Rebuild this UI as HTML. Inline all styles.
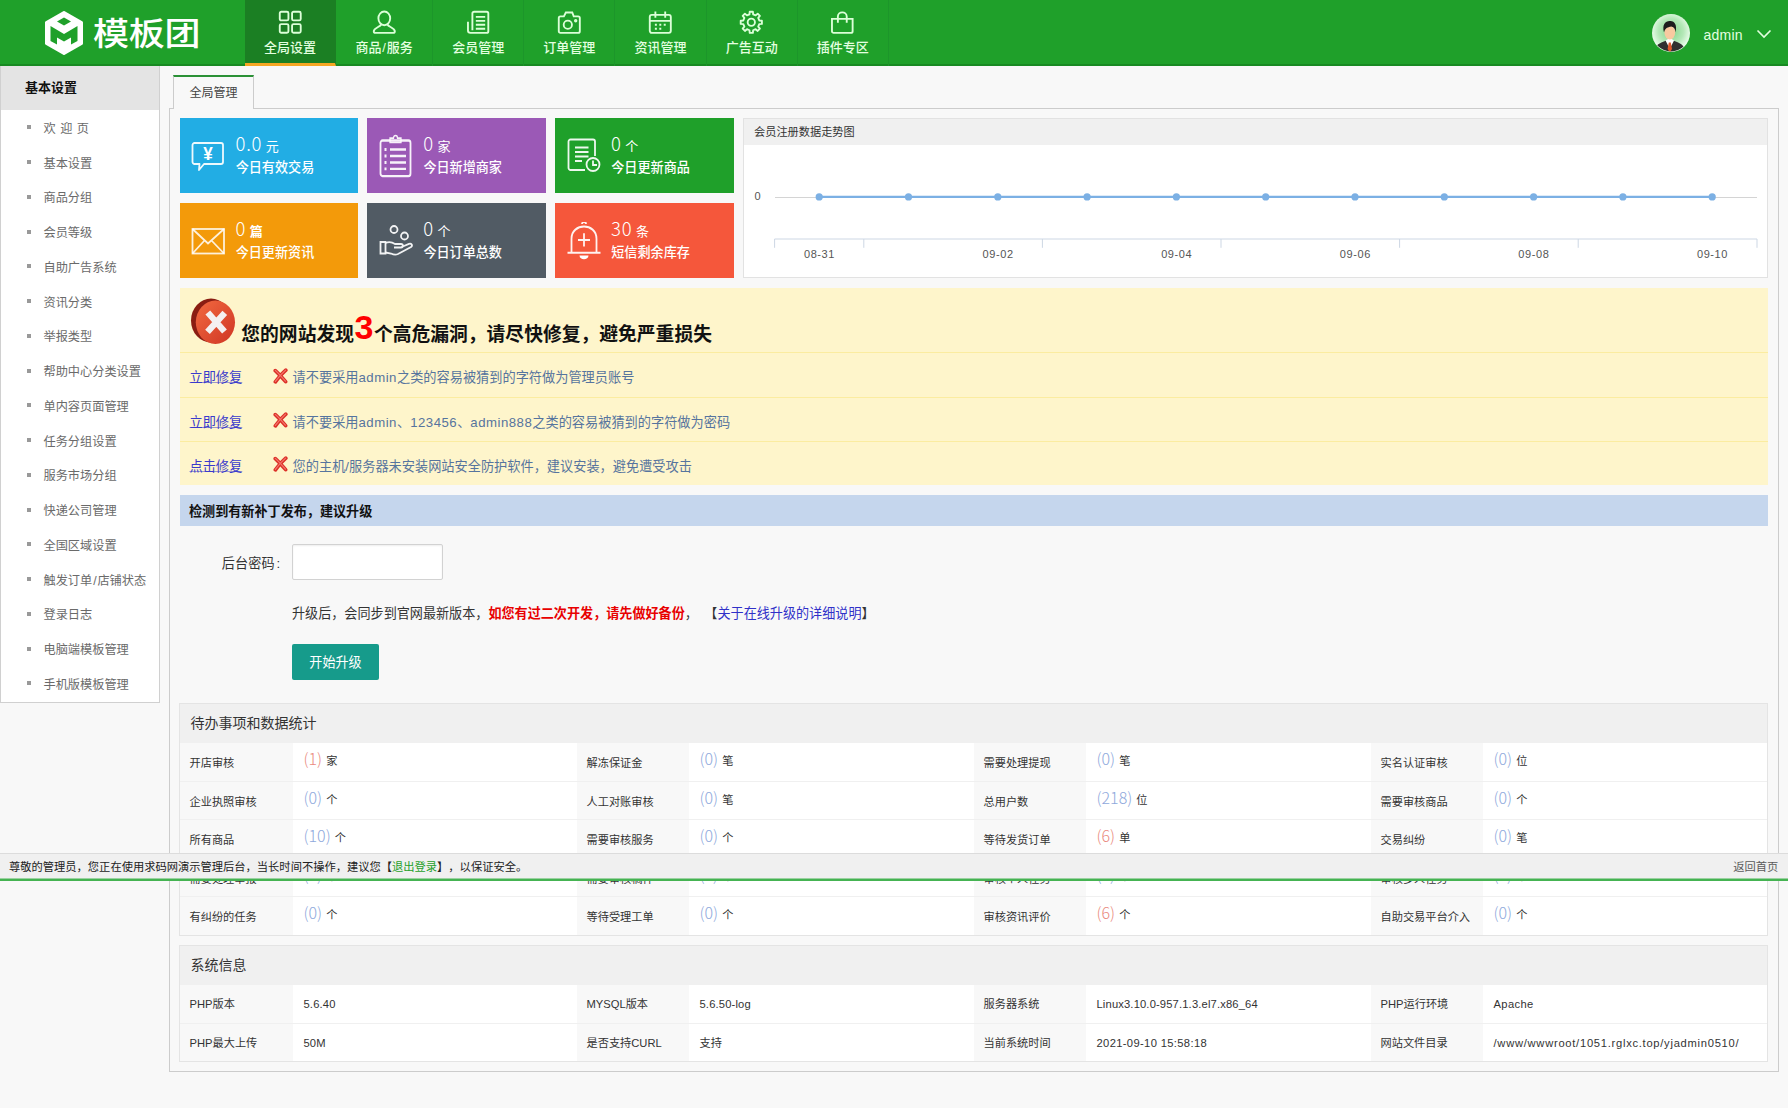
<!DOCTYPE html>
<html lang="zh-CN">
<head>
<meta charset="utf-8">
<title>模板团 - 全局管理</title>
<style>
*{box-sizing:border-box;}
html,body{margin:0;padding:0;}
body{width:1788px;height:1108px;overflow:hidden;background:#f8f8f8;font-family:"Liberation Sans","Noto Sans CJK SC",sans-serif;font-size:12px;color:#333;position:relative;text-spacing-trim:space-all;}
a{text-decoration:none;color:inherit;}
ul{list-style:none;margin:0;padding:0;}

/* ---------- header ---------- */
#hd{position:absolute;left:0;top:0;width:1788px;height:66px;background:#1fa02a;border-bottom:2px solid #188a22;}
#logo{position:absolute;left:44px;top:11px;width:160px;height:44px;}
#logo svg{position:absolute;left:0;top:0;}
#logo .t{position:absolute;left:49px;top:-3px;font-size:36px;line-height:50px;color:#fff;font-weight:500;letter-spacing:-0.2px;white-space:nowrap;transform:scaleY(0.88);transform-origin:0 34px;}
#nav{position:absolute;left:245px;top:0;height:66px;display:flex;}
#nav li{height:66px;width:91.15px;padding:0;border-right:1px solid #1c962a;text-align:center;color:#e4ffe0;font-size:13px;position:relative;}
#nav li.w{width:97px;}
#nav li svg{display:block;margin:10.2px auto 0;width:24.6px;height:24.6px;}
#nav li span{display:block;line-height:18px;margin-top:4px;font-weight:500;white-space:nowrap;}
#nav li.on{background:#1b7f23;border-bottom:3px solid #f5a623;border-right-color:#1b7f23;}
#user{position:absolute;left:0;top:0;width:1788px;height:0;}
#user .av{position:absolute;left:1652px;top:14px;width:38px;height:38px;}
#user .nm{position:absolute;left:1703.5px;top:26px;font-size:14px;line-height:18px;color:#e4ffe0;letter-spacing:0.25px;}
#user .ar{position:absolute;left:1756px;top:29px;}

/* ---------- sidebar ---------- */
#sd{position:absolute;left:0;top:66px;width:160px;height:636.5px;background:#fff;border:1px solid #d0d0d0;border-top:0;}
#sd h3{margin:0;height:43.5px;background:#e4e4e4;font-size:13px;line-height:43px;padding-left:24px;color:#111;font-weight:bold;}
#sd ul{padding-top:2.4px;}
#sd li{height:34.75px;line-height:34.75px;padding-left:42.5px;font-size:12.2px;color:#6a6a6a;position:relative;white-space:nowrap;}
#sd li:before{content:"";position:absolute;left:26.3px;top:13.5px;width:4px;height:4px;background:#999;}

/* ---------- main ---------- */
#tab{position:absolute;left:173px;top:75px;width:81px;height:34px;border:1px solid #ccc;border-top:2px solid #2b9136;border-bottom:0;background:#f8f8f8;font-size:12px;line-height:33px;text-align:center;color:#444;z-index:2;}
#box{position:absolute;left:169px;top:108px;width:1610px;height:964px;border:1px solid #ccc;}

.card{position:absolute;width:178.5px;height:75.2px;color:#fff;}
.card svg{position:absolute;left:11.5px;top:22px;width:34px;height:34px;}
.card .n{position:absolute;left:56px;top:13px;font-family:"Noto Sans CJK SC","Liberation Sans",sans-serif;font-size:18.5px;line-height:24px;font-weight:300;white-space:nowrap;letter-spacing:0.8px;}
.card .n i{font-style:normal;font-size:13px;font-weight:400;margin-left:3.5px;letter-spacing:0;}
.card .l{position:absolute;left:56.2px;top:40.5px;font-size:13.1px;line-height:18px;white-space:nowrap;font-weight:500;}

#chart{position:absolute;left:743px;top:118px;width:1025px;height:160px;background:#fff;border:1px solid #e2e2e2;}
#chart h4{margin:0;height:26px;background:#f0f0f0;font-size:11.2px;font-weight:normal;line-height:26px;padding-left:10px;color:#333;}
#chart svg{position:absolute;left:0;top:26px;}

#warn{position:absolute;left:180px;top:287.8px;width:1588px;height:196.8px;background:#fef5cb;}
#warn .ic{position:absolute;left:10px;top:10px;}
#warn h2{position:absolute;left:61.3px;top:29.4px;margin:0;font-size:18.8px;line-height:30px;font-weight:bold;color:#111;white-space:nowrap;}
#warn h2 b{color:#f00;font-size:34px;font-weight:bold;vertical-align:1.5px;margin:0 0.5px;line-height:20px;}
#warn .r{position:absolute;left:0;width:1588px;height:44px;border-top:1px solid #fbeca0;font-size:13.2px;line-height:44px;white-space:nowrap;}
#warn .r a{position:absolute;left:9.5px;top:2.8px;color:#3a3acc;text-decoration:underline;text-decoration-thickness:1px;text-underline-offset:0.3px;text-decoration-color:rgba(58,58,204,0.5);}
#warn .r svg{position:absolute;left:93px;top:14.5px;}
#warn .r span{position:absolute;left:112.6px;top:2.8px;color:#56749e;}
#warn .r span u{text-decoration:none;letter-spacing:0.5px;}
#upd{position:absolute;left:180px;top:494.6px;width:1588px;height:31px;background:#c5d6ed;font-size:13.1px;line-height:34px;font-weight:bold;color:#111;padding-left:9px;}
#pwl{position:absolute;left:221.8px;top:554.5px;font-size:13.1px;line-height:18px;color:#333;letter-spacing:0.1px;}
#pw{position:absolute;left:292px;top:544px;width:151px;height:36px;border:1px solid #d2d2d2;border-radius:2px;background:#fff;box-shadow:inset 0 1px 2px rgba(0,0,0,0.07);}
#tip{position:absolute;left:292px;top:604.5px;font-size:13.1px;line-height:18px;color:#333;white-space:nowrap;word-spacing:2.8px;}
#tip b{color:#e80000;}
#tip a{color:#3030c8;}
#btn{position:absolute;left:292px;top:644px;width:87px;height:36px;background:#169b8b;color:#fff;font-size:13.1px;line-height:38.5px;text-align:center;border-radius:2px;}

.tb{position:absolute;left:179px;width:1589px;border:1px solid #e4e4e4;background:#fff;}
.tb h4{margin:0;height:38px;background:#f0f0f0;font-size:14px;font-weight:normal;line-height:39px;padding-left:10.5px;color:#333;}
.tb .row{display:flex;height:38.5px;border-top:1px solid #f0f0f0;}
.tb .k{width:112px;background:#f8f8f8;font-size:11.2px;line-height:40.2px;padding-left:9.5px;color:#333;white-space:nowrap;flex:none;}
.tb .v{width:285px;font-size:11.2px;line-height:31px;padding-left:10.5px;color:#333;white-space:nowrap;flex:none;}
.tb .v:last-child{width:auto;flex:1;}
.tb .k:first-child{width:113px;}
.tb .k:first-child+.v{width:284px;}
.tb .v em{font-style:normal;font-family:"Noto Sans CJK SC","Liberation Sans",sans-serif;font-size:16px;font-weight:300;color:#8fa9dc;margin-right:4px;letter-spacing:0px;position:relative;top:0px;}
.tb .v em.rd{color:#ea8a80;}

.tb.sys .v{line-height:38.8px;letter-spacing:0.15px;}
.tb.sys .k{line-height:38.8px;}
#ft{position:absolute;left:0;top:853px;width:1788px;height:28px;box-shadow:inset 0 -1px 0 rgba(69,179,82,0.5);background:#f0f0f0;border-top:1px solid #dcdcdc;border-bottom:2px solid #45b352;font-size:11.28px;line-height:26px;color:#222;padding-left:9px;z-index:5;white-space:nowrap;}
#ft a{color:#1fa02a;}
#ft .bk{position:absolute;right:9.8px;top:0;color:#5a5a5a;}
</style>
</head>
<body>

<div id="hd">
  <div id="logo">
    <svg width="40" height="44" viewBox="0 0 40 44"><path d="M20 1.5 L37.5 11.5 V32.5 L20 42.5 L2.5 32.5 V11.5 Z" fill="#fff" stroke="#fff" stroke-width="3" stroke-linejoin="round"/><path d="M20 6.500 L27 10.500 L20 14.500 L13 10.500 Z" fill="#1fa02a"/><path d="M6.500 15 L20 23 L33.500 15 V30 L27 33.500 V26.500 L20 30.500 L13 26.500 V33.500 L6.500 30 Z" fill="#1fa02a"/></svg>
    <div class="t">模板团</div>
  </div>
  <ul id="nav">
    <li class="on"><svg viewBox="0 0 25 25" fill="none" stroke="#dcffd8" stroke-width="1.9"><rect x="1.800" y="1.800" width="8.800" height="8.800" rx="1.500"/><rect x="14.300" y="1.800" width="8.800" height="8.800" rx="1.500"/><rect x="1.800" y="14.300" width="8.800" height="8.800" rx="1.500"/><rect x="14.300" y="14.300" width="8.800" height="8.800" rx="1.500"/></svg><span>全局设置</span></li>
    <li class="w"><svg viewBox="0 0 25 25" fill="none" stroke="#dcffd8" stroke-width="1.9"><ellipse cx="12.500" cy="8.500" rx="6" ry="7"/><path d="M9.500 14.500 C8 17.500 2 18 1.800 21.500 C1.800 22.800 2.500 23.200 3.500 23.200 H21.500 C22.500 23.200 23.200 22.800 23.200 21.500 C23 18 17 17.500 15.500 14.500"/></svg><span>商品<b style="font-weight:normal;margin:0 0.8px">/</b>服务</span></li>
    <li><svg viewBox="0 0 25 25" fill="none" stroke="#dcffd8" stroke-width="1.9"><path d="M6.500 20.500 V3.500 C6.500 2.500 7.200 1.800 8.200 1.800 H21 C22 1.800 22.700 2.500 22.700 3.500 V21.500 C22.700 22.500 22 23.200 21 23.200 H4.500 C3 23.200 2 22.200 2 20.800 V12"/><path d="M10 7 H19.500 M10 11 H19.500 M10 15 H19.500 M10 19 H19.500"/></svg><span>会员管理</span></li>
    <li><svg viewBox="0 0 25 25" fill="none" stroke="#dcffd8" stroke-width="1.9"><path d="M3.500 6.500 H7 L9 2.500 H15.500 L17 6.500 H21.500 C22.500 6.500 23.200 7.200 23.200 8.200 V21.500 C23.200 22.500 22.500 23.200 21.500 23.200 H3.500 C2.500 23.200 1.800 22.500 1.800 21.500 V8.200 C1.800 7.200 2.500 6.500 3.500 6.500 Z"/><circle cx="11" cy="15" r="4.200"/><circle cx="19" cy="11" r="0.800"/></svg><span>订单管理</span></li>
    <li><svg viewBox="0 0 25 25" fill="none" stroke="#dcffd8" stroke-width="1.9"><rect x="1.800" y="5" width="21.400" height="18.200" rx="2"/><path d="M1.800 11 H23.200 M7.500 1.500 V8 M17.500 1.500 V8"/><path d="M7 15 H9 M11.500 15 H13.500 M16 15 H18 M7 19 H9 M11.500 19 H13.500" stroke-width="2"/></svg><span>资讯管理</span></li>
    <li><svg viewBox="0 0 25 25" fill="none" stroke="#dcffd8" stroke-width="1.9" stroke-linejoin="round"><path d="M10.63 4.41 L10.89 1.72 L14.11 1.72 L14.37 4.41 L16.90 5.46 L18.98 3.74 L21.26 6.02 L19.54 8.10 L20.59 10.63 L23.28 10.89 L23.28 14.11 L20.59 14.37 L19.54 16.90 L21.26 18.98 L18.98 21.26 L16.90 19.54 L14.37 20.59 L14.11 23.28 L10.89 23.28 L10.63 20.59 L8.10 19.54 L6.02 21.26 L3.74 18.98 L5.46 16.90 L4.41 14.37 L1.72 14.11 L1.72 10.89 L4.41 10.63 L5.46 8.10 L3.74 6.02 L6.02 3.74 L8.10 5.46 Z"/><circle cx="12.500" cy="12.500" r="3.700"/></svg><span>广告互动</span></li>
    <li><svg viewBox="0 0 25 25" fill="none" stroke="#dcffd8" stroke-width="1.9"><path d="M2 9 H23 V21.500 C23 22.500 22.300 23.200 21.300 23.200 H3.700 C2.700 23.200 2 22.500 2 21.500 Z"/><path d="M8 13 V6.500 C8 1 17 1 17 6.500 V13"/></svg><span>插件专区</span></li>
  </ul>
  <div id="user">
    <svg class="av" viewBox="0 0 38 38"><defs><radialGradient id="ag" cx="50%" cy="45%" r="55%"><stop offset="0" stop-color="#7fd487"/><stop offset="0.600" stop-color="#b5e8b8"/><stop offset="1" stop-color="#f2fff2"/></radialGradient><clipPath id="ac"><circle cx="19" cy="19" r="18.500"/></clipPath></defs><circle cx="19" cy="19" r="19" fill="url(#ag)"/><g clip-path="url(#ac)"><g transform="translate(-1.2 0)"><path d="M3 38 C4 31 10 28.500 15 26.800 L19 31 L23 26.800 C28 28.500 34 31 35 38 Z" fill="#303030"/><path d="M14.800 26.500 L19 35 L23.200 26.500 L19 24 Z" fill="#fff"/><path d="M18 28.500 H20 L21.200 35 L19 38.500 L16.800 35 Z" fill="#e2572b"/><ellipse cx="19" cy="18.300" rx="5.400" ry="7.200" fill="#f8c9a0"/><path d="M13.200 18.500 C11 10 15 6.800 19 7 C23.500 6.500 26.500 10.500 24.800 18.500 C24.600 15 23.500 13 20.500 12.500 C17.500 13.500 14.500 13 13.200 18.500 Z" fill="#1c1c1c"/></g></g></svg>
    <div class="nm">admin</div>
    <svg class="ar" width="16" height="10" viewBox="0 0 16 10" fill="none" stroke="#e4ffe0" stroke-width="1.6"><path d="M1.500 1.500 L8 8 L14.500 1.500"/></svg>
  </div>
</div>

<div id="sd">
  <h3>基本设置</h3>
  <ul>
    <li style="word-spacing:1.1px">欢 迎 页</li>
    <li>基本设置</li>
    <li>商品分组</li>
    <li>会员等级</li>
    <li>自助广告系统</li>
    <li>资讯分类</li>
    <li>举报类型</li>
    <li>帮助中心分类设置</li>
    <li>单内容页面管理</li>
    <li>任务分组设置</li>
    <li>服务市场分组</li>
    <li>快递公司管理</li>
    <li>全国区域设置</li>
    <li>触发订单<span style="margin:0 0.9px">/</span>店铺状态</li>
    <li>登录日志</li>
    <li>电脑端模板管理</li>
    <li>手机版模板管理</li>
  </ul>
</div>

<div id="tab">全局管理</div>
<div id="box"></div>

<!-- CARDS -->
<div class="card" style="left:179.5px;top:118px;background:#22ade4;">
  <svg viewBox="0 0 34 34" fill="none" stroke="#fff" stroke-width="1.8" stroke-opacity="0.92"><path d="M3 3 H30 C31 3 32 4 32 5 V22 C32 23 31 24 30 24 H13 L8 30 L8.500 24 H3.500 C2.500 24 1.500 23 1.500 22 V5 C1.500 4 2.500 3 3.500 3 Z" stroke-linejoin="round"/><text x="17" y="20.300" font-family="Liberation Sans, sans-serif" font-size="18" font-weight="bold" textLength="9.5" lengthAdjust="spacingAndGlyphs" text-anchor="middle" fill="#fff" stroke="none">¥</text></svg>
  <div class="n">0.0<i>元</i></div><div class="l">今日有效交易</div>
</div>
<div class="card" style="left:367.2px;top:118px;background:#9b59b6;">
  <svg viewBox="0 0 34 34" fill="none" stroke="#fff" stroke-width="1.8" stroke-opacity="0.92" style="top:15.5px;height:44px;" preserveAspectRatio="none"><rect x="1.500" y="5" width="30" height="27.500" rx="2"/><path d="M11 5 V3.200 H14.500 C14.500 0.500 18.500 0.500 18.500 3.200 H22 V6.500 H11 Z" stroke-width="1.300"/><path d="M11 12 H27 M11 17 H27 M11 22 H27 M11 27 H27"/><path d="M5.500 12 H7.500 M5.500 17 H7.500 M5.500 22 H7.500 M5.500 27 H7.500" stroke-width="2.200"/></svg>
  <div class="n">0<i>家</i></div><div class="l">今日新增商家</div>
</div>
<div class="card" style="left:555.1px;top:118px;background:#1fa02a;">
  <svg viewBox="0 0 34 34" fill="none" stroke="#fff" stroke-width="1.8" stroke-opacity="0.92" style="top:20px"><path d="M18 32 H3.500 C2.500 32 1.500 31 1.500 30 V3.500 C1.500 2.500 2.500 1.500 3.500 1.500 H26 C27 1.500 28 2.500 28 3.500 V18"/><path d="M8 9.500 H21.500 M8 14 H21.500 M8 18.500 H21.500 M8 23 H15"/><circle cx="26" cy="26.500" r="6.500" stroke-width="1.800"/><path d="M26 22.500 V27 H30" stroke-width="1.800"/></svg>
  <div class="n">0<i>个</i></div><div class="l">今日更新商品</div>
</div>
<div class="card" style="left:179.5px;top:203px;background:#f39a0a;">
  <svg viewBox="0 0 34 34" fill="none" stroke="#fff" stroke-width="1.8" stroke-opacity="0.85" style="top:20.5px"><rect x="1.500" y="5" width="31.500" height="24.500"/><path d="M1.500 5 L17 19.500 L33 5 M1.500 29.500 L13.500 16.500 M33 29.500 L20.500 16.500"/></svg>
  <div class="n">0<i style="font-weight:bold">篇</i></div><div class="l">今日更新资讯</div>
</div>
<div class="card" style="left:367.2px;top:203px;background:#515b64;">
  <svg viewBox="0 0 34 34" fill="none" stroke="#fff" stroke-width="1.8" stroke-opacity="0.92" style="top:19.5px"><circle cx="15" cy="6.500" r="3.500"/><circle cx="25.500" cy="13" r="3.500"/><path d="M1.500 19 H6.500 V30.500 H1.500 Z"/><path d="M6.500 20 C10 18.500 13 19 16 21 H22 C24.500 21 24.500 24.500 22 24.500 H15 M22.500 24 L30 20.800 C32.500 20 34 22.500 32 24 L19 31 C17 32 14 31.500 12 30.500 L6.500 29.500"/></svg>
  <div class="n">0<i>个</i></div><div class="l">今日订单总数</div>
</div>
<div class="card" style="left:555.1px;top:203px;background:#f5573b;">
  <svg viewBox="0 0 34 34" fill="none" stroke="#fff" stroke-width="1.8" stroke-opacity="0.92" style="top:19px;height:38px;" preserveAspectRatio="none"><path d="M4.500 27 V15 C4.500 0.500 29.500 0.500 29.500 15 V27 M0.500 27.500 H33.500 M15 1.800 C15 -0.500 19 -0.500 19 1.800"/><path d="M17 10 V22 M11 16 H23" stroke-width="1.800"/><path d="M12.500 30 H21.500 C21.500 34.500 12.500 34.500 12.500 30 Z" fill="#fff" stroke="none"/></svg>
  <div class="n">30<i>条</i></div><div class="l">短信剩余库存</div>
</div>

<!-- CHART -->
<div id="chart">
  <h4>会员注册数据走势图</h4>
  <svg width="1023" height="132" viewBox="0 0 1023 132" font-family="Liberation Sans, sans-serif" font-size="11" fill="#555">
    <path d="M31 52.5 H1013" stroke="#d4d4d4" stroke-width="1" fill="none"/>
    <path d="M30.6 94.0 H1013 M30.6 94.0 V102.8 M119.8 94.0 V102.8 M298.4 94.0 V102.8 M477.0 94.0 V102.8 M655.6 94.0 V102.8 M834.2 94.0 V102.8 M1013.0 94.0 V102.8" stroke="#cdd7e4" stroke-width="1" fill="none"/>
    <polyline points="75.2,51.8 164.5,51.8 253.8,51.8 343.1,51.8 432.4,51.8 521.7,51.8 611.0,51.8 700.3,51.8 789.6,51.8 878.9,51.8 968.2,51.8" fill="none" stroke="#7cb0e4" stroke-width="2.2"/>
    <g fill="#7cb0e4"><circle cx="75.2" cy="51.9" r="3.6"/><circle cx="164.5" cy="51.9" r="3.6"/><circle cx="253.8" cy="51.9" r="3.6"/><circle cx="343.1" cy="51.9" r="3.6"/><circle cx="432.4" cy="51.9" r="3.6"/><circle cx="521.7" cy="51.9" r="3.6"/><circle cx="611.0" cy="51.9" r="3.6"/><circle cx="700.3" cy="51.9" r="3.6"/><circle cx="789.6" cy="51.9" r="3.6"/><circle cx="878.9" cy="51.9" r="3.6"/><circle cx="968.2" cy="51.9" r="3.6"/></g>
    <text x="13.6" y="55.3" text-anchor="middle">0</text>
    <g letter-spacing="0.6"><text x="75.5" y="113.0" text-anchor="middle">08-31</text><text x="254.1" y="113.0" text-anchor="middle">09-02</text><text x="432.7" y="113.0" text-anchor="middle">09-04</text><text x="611.3" y="113.0" text-anchor="middle">09-06</text><text x="789.9" y="113.0" text-anchor="middle">09-08</text><text x="968.5" y="113.0" text-anchor="middle">09-10</text></g>
  </svg>
</div>

<!-- WARN -->
<div id="warn">
  <svg class="ic" width="46" height="48" viewBox="0 0 46 48"><defs><linearGradient id="wg" x1="0" y1="0" x2="1" y2="1"><stop offset="0" stop-color="#f26a40"/><stop offset="1" stop-color="#cf3524"/></linearGradient></defs><ellipse cx="21" cy="22.500" rx="20" ry="22" fill="#8a1d12"/><ellipse cx="25.400" cy="24.300" rx="19.600" ry="21.700" fill="url(#wg)"/><path d="M17.800 14.500 L34.500 33.500 M34.800 14.800 L17.500 33.800" stroke="#f4f0f0" stroke-width="6.300"/></svg>
  <h2>您的网站发现<b>3</b>个高危漏洞，请尽快修复，避免严重损失</h2>
  <div class="r" style="top:64.7px;"><a>立即修复</a><svg width="15" height="16" viewBox="0 0 15 16" fill="none" stroke-linecap="round"><path d="M2.300 2.600 C5.500 5.500 9 9.500 12.600 13.600 M12.800 2.200 C9 5.500 5.500 9.500 2.400 13.800" stroke="#dc3128" stroke-width="3.700"/><path d="M2.300 2.400 C5.500 5.300 9 9.200 12.400 13.200 M12.600 2.100 C9 5.300 5.500 9.200 2.400 13.400" stroke="#f4766c" stroke-width="1.200"/></svg><span>请不要采用<u>admin</u>之类的容易被猜到的字符做为管理员账号</span></div>
  <div class="r" style="top:109px;"><a>立即修复</a><svg width="15" height="16" viewBox="0 0 15 16" fill="none" stroke-linecap="round"><path d="M2.300 2.600 C5.500 5.500 9 9.500 12.600 13.600 M12.800 2.200 C9 5.500 5.500 9.500 2.400 13.800" stroke="#dc3128" stroke-width="3.700"/><path d="M2.300 2.400 C5.500 5.300 9 9.200 12.400 13.200 M12.600 2.100 C9 5.300 5.500 9.200 2.400 13.400" stroke="#f4766c" stroke-width="1.200"/></svg><span>请不要采用<u>admin</u>、<u>123456</u>、<u>admin888</u>之类的容易被猜到的字符做为密码</span></div>
  <div class="r" style="top:153px;"><a>点击修复</a><svg width="15" height="16" viewBox="0 0 15 16" fill="none" stroke-linecap="round"><path d="M2.300 2.600 C5.500 5.500 9 9.500 12.600 13.600 M12.800 2.200 C9 5.500 5.500 9.500 2.400 13.800" stroke="#dc3128" stroke-width="3.700"/><path d="M2.300 2.400 C5.500 5.300 9 9.200 12.400 13.200 M12.600 2.100 C9 5.300 5.500 9.200 2.400 13.400" stroke="#f4766c" stroke-width="1.200"/></svg><span>您的主机/服务器未安装网站安全防护软件，建议安装，避免遭受攻击</span></div>
</div>

<!-- UPDATE -->
<div id="upd">检测到有新补丁发布，建议升级</div>
<div id="pwl">后台密码<span style="margin-left:2px">:</span></div>
<div id="pw"></div>
<div id="tip">升级后，会同步到官网最新版本，<b>如您有过二次开发，请先做好备份</b>， 【<a>关于在线升级的详细说明</a>】</div>
<div id="btn">开始升级</div>

<!-- TABLES -->
<div class="tb" style="top:703px;">
  <h4>待办事项和数据统计</h4>
  <div class="row"><div class="k">开店审核</div><div class="v"><em class="rd">(1)</em>家</div><div class="k">解冻保证金</div><div class="v"><em>(0)</em>笔</div><div class="k">需要处理提现</div><div class="v"><em>(0)</em>笔</div><div class="k">实名认证审核</div><div class="v"><em>(0)</em>位</div></div>
  <div class="row"><div class="k">企业执照审核</div><div class="v"><em>(0)</em>个</div><div class="k">人工对账审核</div><div class="v"><em>(0)</em>笔</div><div class="k">总用户数</div><div class="v"><em>(218)</em>位</div><div class="k">需要审核商品</div><div class="v"><em>(0)</em>个</div></div>
  <div class="row"><div class="k">所有商品</div><div class="v"><em>(10)</em>个</div><div class="k">需要审核服务</div><div class="v"><em>(0)</em>个</div><div class="k">等待发货订单</div><div class="v"><em class="rd">(6)</em>单</div><div class="k">交易纠纷</div><div class="v"><em>(0)</em>笔</div></div>
  <div class="row"><div class="k">需要处理举报</div><div class="v"><em>(0)</em>个</div><div class="k">需要审核稿件</div><div class="v"><em>(0)</em>个</div><div class="k">审核个人任务</div><div class="v"><em>(0)</em>个</div><div class="k">审核多人任务</div><div class="v"><em>(0)</em>个</div></div>
  <div class="row"><div class="k">有纠纷的任务</div><div class="v"><em>(0)</em>个</div><div class="k">等待受理工单</div><div class="v"><em>(0)</em>个</div><div class="k">审核资讯评价</div><div class="v"><em class="rd">(6)</em>个</div><div class="k">自助交易平台介入</div><div class="v"><em>(0)</em>个</div></div>
</div>
<div class="tb sys" style="top:945px;">
  <h4>系统信息</h4>
  <div class="row"><div class="k">PHP版本</div><div class="v">5.6.40</div><div class="k">MYSQL版本</div><div class="v">5.6.50-log</div><div class="k">服务器系统</div><div class="v">Linux3.10.0-957.1.3.el7.x86_64</div><div class="k">PHP运行环境</div><div class="v" style="letter-spacing:0.35px">Apache</div></div>
  <div class="row"><div class="k">PHP最大上传</div><div class="v">50M</div><div class="k">是否支持CURL</div><div class="v">支持</div><div class="k">当前系统时间</div><div class="v" style="letter-spacing:0.35px">2021-09-10 15:58:18</div><div class="k">网站文件目录</div><div class="v" style="letter-spacing:0.72px">/www/wwwroot/1051.rglxc.top/yjadmin0510/</div></div>
</div>

<div id="ft">尊敬的管理员，您正在使用求码网演示管理后台，当长时间不操作，建议您【<a>退出登录</a>】，以保证安全。<span class="bk">返回首页</span></div>

</body>
</html>
